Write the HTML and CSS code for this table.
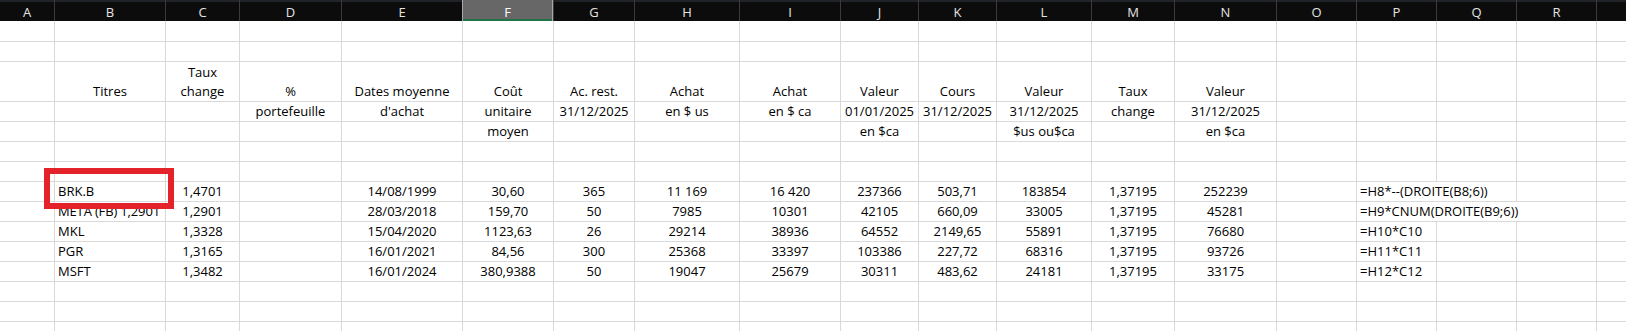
FILE: index.html
```html
<!DOCTYPE html>
<html lang="fr">
<head>
<meta charset="utf-8">
<title>Portefeuille</title>
<link rel="stylesheet" href="styles.css">
</head>
<body>
<div class="sheet">
  <div class="row hdr">
    <div class="h">A</div><div class="h">B</div><div class="h">C</div><div class="h">D</div><div class="h">E</div><div class="h sel">F</div><div class="h">G</div><div class="h">H</div><div class="h">I</div><div class="h">J</div><div class="h">K</div><div class="h">L</div><div class="h">M</div><div class="h">N</div><div class="h">O</div><div class="h">P</div><div class="h">Q</div><div class="h">R</div><div class="h"></div>
  </div>
  <div class="row r1">
    <div class="c"></div><div class="c"></div><div class="c"></div><div class="c"></div><div class="c"></div><div class="c"></div><div class="c"></div><div class="c"></div><div class="c"></div><div class="c"></div><div class="c"></div><div class="c"></div><div class="c"></div><div class="c"></div><div class="c"></div><div class="c"></div><div class="c"></div><div class="c"></div><div class="c"></div>
  </div>
  <div class="row">
    <div class="c"></div><div class="c"></div><div class="c"></div><div class="c"></div><div class="c"></div><div class="c"></div><div class="c"></div><div class="c"></div><div class="c"></div><div class="c"></div><div class="c"></div><div class="c"></div><div class="c"></div><div class="c"></div><div class="c"></div><div class="c"></div><div class="c"></div><div class="c"></div><div class="c"></div>
  </div>
  <div class="row tall">
    <div class="c"></div><div class="c">Titres</div><div class="c"><span>Taux<br>change</span></div><div class="c">%</div><div class="c">Dates moyenne</div><div class="c">Coût</div><div class="c">Ac. rest.</div><div class="c">Achat</div><div class="c">Achat</div><div class="c">Valeur</div><div class="c">Cours</div><div class="c">Valeur</div><div class="c">Taux</div><div class="c">Valeur</div><div class="c"></div><div class="c"></div><div class="c"></div><div class="c"></div><div class="c"></div>
  </div>
  <div class="row">
    <div class="c"></div><div class="c"></div><div class="c"></div><div class="c">portefeuille</div><div class="c">d'achat</div><div class="c">unitaire</div><div class="c">31/12/2025</div><div class="c">en $ us</div><div class="c">en $ ca</div><div class="c">01/01/2025</div><div class="c">31/12/2025</div><div class="c">31/12/2025</div><div class="c">change</div><div class="c">31/12/2025</div><div class="c"></div><div class="c"></div><div class="c"></div><div class="c"></div><div class="c"></div>
  </div>
  <div class="row">
    <div class="c"></div><div class="c"></div><div class="c"></div><div class="c"></div><div class="c"></div><div class="c">moyen</div><div class="c"></div><div class="c"></div><div class="c"></div><div class="c">en $ca</div><div class="c"></div><div class="c">$us ou$ca</div><div class="c"></div><div class="c">en $ca</div><div class="c"></div><div class="c"></div><div class="c"></div><div class="c"></div><div class="c"></div>
  </div>
  <div class="row">
    <div class="c"></div><div class="c"></div><div class="c"></div><div class="c"></div><div class="c"></div><div class="c"></div><div class="c"></div><div class="c"></div><div class="c"></div><div class="c"></div><div class="c"></div><div class="c"></div><div class="c"></div><div class="c"></div><div class="c"></div><div class="c"></div><div class="c"></div><div class="c"></div><div class="c"></div>
  </div>
  <div class="row">
    <div class="c"></div><div class="c"></div><div class="c"></div><div class="c"></div><div class="c"></div><div class="c"></div><div class="c"></div><div class="c"></div><div class="c"></div><div class="c"></div><div class="c"></div><div class="c"></div><div class="c"></div><div class="c"></div><div class="c"></div><div class="c"></div><div class="c"></div><div class="c"></div><div class="c"></div>
  </div>
  <div class="row">
    <div class="c"></div><div class="c l">BRK.B</div><div class="c">1,4701</div><div class="c"></div><div class="c">14/08/1999</div><div class="c">30,60</div><div class="c">365</div><div class="c">11 169</div><div class="c">16 420</div><div class="c">237366</div><div class="c">503,71</div><div class="c">183854</div><div class="c">1,37195</div><div class="c">252239</div><div class="c"></div><div class="c l span2">=H8*--(DROITE(B8;6))</div><div class="c"></div><div class="c"></div>
  </div>
  <div class="row">
    <div class="c"></div><div class="c l tight">META (FB) 1,2901</div><div class="c">1,2901</div><div class="c"></div><div class="c">28/03/2018</div><div class="c">159,70</div><div class="c">50</div><div class="c">7985</div><div class="c">10301</div><div class="c">42105</div><div class="c">660,09</div><div class="c">33005</div><div class="c">1,37195</div><div class="c">45281</div><div class="c"></div><div class="c l span3">=H9*CNUM(DROITE(B9;6))</div><div class="c"></div>
  </div>
  <div class="row">
    <div class="c"></div><div class="c l">MKL</div><div class="c">1,3328</div><div class="c"></div><div class="c">15/04/2020</div><div class="c">1123,63</div><div class="c">26</div><div class="c">29214</div><div class="c">38936</div><div class="c">64552</div><div class="c">2149,65</div><div class="c">55891</div><div class="c">1,37195</div><div class="c">76680</div><div class="c"></div><div class="c l">=H10*C10</div><div class="c"></div><div class="c"></div><div class="c"></div>
  </div>
  <div class="row">
    <div class="c"></div><div class="c l">PGR</div><div class="c">1,3165</div><div class="c"></div><div class="c">16/01/2021</div><div class="c">84,56</div><div class="c">300</div><div class="c">25368</div><div class="c">33397</div><div class="c">103386</div><div class="c">227,72</div><div class="c">68316</div><div class="c">1,37195</div><div class="c">93726</div><div class="c"></div><div class="c l">=H11*C11</div><div class="c"></div><div class="c"></div><div class="c"></div>
  </div>
  <div class="row">
    <div class="c"></div><div class="c l">MSFT</div><div class="c">1,3482</div><div class="c"></div><div class="c">16/01/2024</div><div class="c">380,9388</div><div class="c">50</div><div class="c">19047</div><div class="c">25679</div><div class="c">30311</div><div class="c">483,62</div><div class="c">24181</div><div class="c">1,37195</div><div class="c">33175</div><div class="c"></div><div class="c l">=H12*C12</div><div class="c"></div><div class="c"></div><div class="c"></div>
  </div>
  <div class="row">
    <div class="c"></div><div class="c"></div><div class="c"></div><div class="c"></div><div class="c"></div><div class="c"></div><div class="c"></div><div class="c"></div><div class="c"></div><div class="c"></div><div class="c"></div><div class="c"></div><div class="c"></div><div class="c"></div><div class="c"></div><div class="c"></div><div class="c"></div><div class="c"></div><div class="c"></div>
  </div>
  <div class="row">
    <div class="c"></div><div class="c"></div><div class="c"></div><div class="c"></div><div class="c"></div><div class="c"></div><div class="c"></div><div class="c"></div><div class="c"></div><div class="c"></div><div class="c"></div><div class="c"></div><div class="c"></div><div class="c"></div><div class="c"></div><div class="c"></div><div class="c"></div><div class="c"></div><div class="c"></div>
  </div>
  <div class="row">
    <div class="c"></div><div class="c"></div><div class="c"></div><div class="c"></div><div class="c"></div><div class="c"></div><div class="c"></div><div class="c"></div><div class="c"></div><div class="c"></div><div class="c"></div><div class="c"></div><div class="c"></div><div class="c"></div><div class="c"></div><div class="c"></div><div class="c"></div><div class="c"></div><div class="c"></div>
  </div>
  <div class="mark"></div>
</div>
</body>
</html>
```

FILE: styles.css
```css
html, body {
  margin: 0;
  padding: 0;
  background: #ffffff;
}

.sheet {
  position: relative;
  width: 1626px;
  height: 331px;
  overflow: hidden;
  font-family: "Open Sans", "Liberation Sans", sans-serif;
  font-size: 13px;
  color: #000000;
}

.row {
  display: grid;
  grid-template-columns: 54px 111px 74px 102px 121px 91px 81px 105px 101px 78px 78px 95px 83px 102px 80px 80px 80px 80px 30px;
  height: 20px;
  box-sizing: border-box;
  border-bottom: 1px solid #d9d9d9;
}

.row.r1 { height: 21px; }
.row.tall { height: 40px; }

.hdr {
  height: 21px;
  background: #0c0c0c;
  border-bottom: none;
  box-shadow: inset 0 2px 0 #202327;
}

.h {
  display: flex;
  align-items: center;
  justify-content: center;
  padding-top: 2px;
  color: #e4e4e4;
  font-size: 13px;
  border-left: 1px solid #3a3a3a;
  box-sizing: border-box;
}

.h:first-child { border-left: none; }

.h.sel {
  background: #676767;
  border-left: 1px solid #a8a8a8;
  border-right: 1px solid #a8a8a8;
  box-shadow: inset 0 -2px 0 #217346;
  color: #ffffff;
}

.c {
  display: flex;
  align-items: flex-end;
  justify-content: center;
  text-align: center;
  line-height: 19px;
  white-space: nowrap;
  padding: 0 3px;
  border-left: 1px solid #d9d9d9;
  box-sizing: border-box;
  min-width: 0;
}

.c:first-child { border-left: none; }

.c.l { justify-content: flex-start; text-align: left; }

.c.tight {
  letter-spacing: -0.15px;
  padding-right: 0;
  overflow: hidden;
}

.span2 { grid-column: span 2; }
.span3 { grid-column: span 3; }

.mark {
  position: absolute;
  left: 44px;
  top: 168px;
  width: 130px;
  height: 41px;
  border: 6px solid #e4222a;
  box-sizing: border-box;
}
```
